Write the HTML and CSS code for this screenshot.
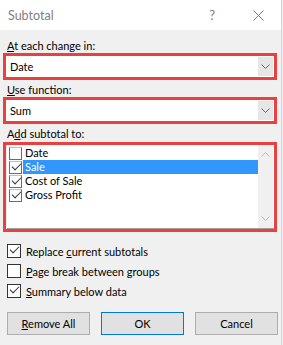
FILE: index.html
```html
<!DOCTYPE html>
<html>
<head>
<meta charset="utf-8">
<title>Subtotal</title>
<link rel="stylesheet" href="styles.css">
</head>
<body>
<div class="dialog">
    <div class="titlebar">
        <span class="title">Subtotal</span>
        <span class="help">?</span>
        <svg class="close" width="11" height="11" viewBox="0 0 11 11"><path d="M0.5 0.5L10.5 10.5M10.5 0.5L0.5 10.5" stroke="#777" stroke-width="1" fill="none"/></svg>
    </div>
    <div class="content">
        <div class="label"><u>A</u>t each change in:</div>
        <div class="mark">
            <div class="select">
                <span class="value">Date</span>
                <span class="drop"><svg width="9" height="5" viewBox="0 0 9 5"><path d="M0.5 0.5L4.5 4.5L8.5 0.5" stroke="#666" fill="none"/></svg></span>
            </div>
        </div>
        <div class="label"><u>U</u>se function:</div>
        <div class="mark">
            <div class="select">
                <span class="value">Sum</span>
                <span class="drop"><svg width="9" height="5" viewBox="0 0 9 5"><path d="M0.5 0.5L4.5 4.5L8.5 0.5" stroke="#666" fill="none"/></svg></span>
            </div>
        </div>
        <div class="label">A<u>d</u>d subtotal to:</div>
        <div class="mark mark-list">
            <div class="list">
                <div class="items">
                    <div class="item"><span class="box"></span><span class="name">Date</span></div>
                    <div class="item sel"><span class="box on"></span><span class="name">Sale</span></div>
                    <div class="item"><span class="box on"></span><span class="name">Cost of Sale</span></div>
                    <div class="item"><span class="box on"></span><span class="name">Gross Profit</span></div>
                </div>
                <div class="scroll">
                    <svg width="9" height="5" viewBox="0 0 9 5"><path d="M0.5 4.5L4.5 0.5L8.5 4.5" stroke="#bbb" fill="none"/></svg>
                    <svg width="9" height="5" viewBox="0 0 9 5"><path d="M0.5 0.5L4.5 4.5L8.5 0.5" stroke="#bbb" fill="none"/></svg>
                </div>
            </div>
        </div>
        <div class="options">
            <div class="opt"><span class="check on"></span><span>Replace <u>c</u>urrent subtotals</span></div>
            <div class="opt"><span class="check"></span><span><u>P</u>age break between groups</span></div>
            <div class="opt"><span class="check on"></span><span><u>S</u>ummary below data</span></div>
        </div>
        <div class="buttons">
            <button class="btn"><u>R</u>emove All</button>
            <button class="btn ok">OK</button>
            <button class="btn">Cancel</button>
        </div>
    </div>
</div>
</body>
</html>
```
FILE: styles.css
```css
html, body { margin: 0; padding: 0; }
body { width: 283px; height: 345px; background: #f0f0f0; font-family: Lato, "Noto Sans", sans-serif; font-size: 11px; color: #000; overflow: hidden; }
u { text-decoration: underline; text-underline-offset: 1px; }

.dialog { width: 281px; height: 345px; border-right: 1px solid #d4d4d4; }
.titlebar { height: 30px; background: #fff; display: flex; align-items: center; }
.title { padding-left: 8px; font-size: 12.5px; color: #808080; flex: 1; }
.help { color: #808080; font-size: 13px; margin-right: 38px; }
.close { margin-right: 17px; }

.content { padding: 8px 0 0 0; }
.label { height: 15px; line-height: 15px; padding-left: 7px; }
.mark { margin: 0 4px 2px 3px; border: 3px solid #e8413f; }

.select { height: 21px; background: #fff; display: flex; align-items: center; }
.select .value { flex: 1; padding-left: 4px; }
.select .drop { width: 15px; height: 19px; margin-right: 1px; background: #e6e6e6; display: flex; align-items: center; justify-content: center; }

.mark-list { margin-top: 1px; margin-bottom: 9px; }
.list { height: 83px; background: #fff; border-bottom: 1px solid #a0a0a0; display: flex; margin-left: 1px; }
.items { flex: 1; padding-top: 1px; }
.item { height: 14px; display: flex; align-items: center; }
.item .box { width: 11px; height: 11px; margin: 0 1px 0 2px; border: 1px solid #6b6b6b; border-top-color: #c0c0c0; position: relative; }
.item .name { flex: 1; height: 14px; line-height: 14px; padding-left: 2px; }
.item.sel .name { background: #3297fd; color: #fff; }
.scroll { width: 15px; margin-right: 1px; background: #f0f0f0; display: flex; flex-direction: column; justify-content: space-between; align-items: center; padding: 7px 0 7px; }

.box.on::after, .check.on::after { content: ""; position: absolute; left: 2px; top: 1px; width: 8px; height: 4px; border-left: 1.5px solid #333; border-bottom: 1.5px solid #333; transform: rotate(-45deg); }

.options { padding-left: 7px; }
.opt { height: 20px; display: flex; align-items: center; }
.check { width: 12px; height: 12px; border: 1px solid #333; background: #fff; margin-right: 5px; position: relative; }

.buttons { display: flex; gap: 11px; padding: 11px 0 0 7px; }
.btn { width: 83px; height: 23px; background: #e1e1e1; border: 1px solid #adadad; font-family: inherit; font-size: 11px; color: #000; padding: 0; }
.btn.ok { border-color: #0078d7; }
```
